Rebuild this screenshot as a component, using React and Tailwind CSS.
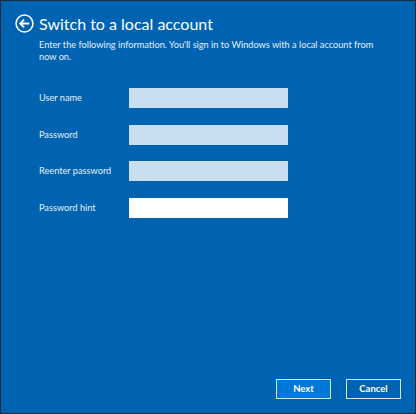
import React from 'react'

const FIELDS = [
  { label: 'User name', color: 'bg-[#c9dfef]' },
  { label: 'Password', color: 'bg-[#c9dfef]' },
  { label: 'Reenter password', color: 'bg-[#c9dfef]' },
  { label: 'Password hint', color: 'bg-white' },
]

const App = () => {
  return (
    <div className="w-[416px] h-[414px] flex flex-col overflow-hidden bg-[#0063b1] border border-[#1c2a3a] text-white font-['Lato',sans-serif]">
      {/* Header */}
      <div className="flex items-center gap-[5px] pl-[14px] pt-[13px]">
        <svg className="w-[19px] h-[19px]" viewBox="0 0 20 20" fill="none" stroke="white">
          <circle cx="10" cy="10" r="8.9" strokeWidth="1.6" />
          <path d="M15 10H6M9.5 6 5.5 10l4 4" strokeWidth="2" />
        </svg>
        <h1 className="text-[16px] leading-[19px] font-normal">Switch to a local account</h1>
      </div>

      <p className="ml-[38px] mt-[5.5px] w-[350px] text-[9.2px] leading-[12.5px] text-[#e6f0f8]">
        Enter the following information. You'll sign in to Windows with a local account from now on.
      </p>

      {/* Form */}
      <div className="ml-[38px] mt-[24.5px] flex flex-col gap-[16.7px]">
        {FIELDS.map(f => (
          <div key={f.label} className="flex items-center">
            <label className="w-[90px] text-[9.2px] text-[#e6f0f8]">{f.label}</label>
            <input type="text" className={`w-[159px] h-[20px] outline-none ${f.color}`} />
          </div>
        ))}
      </div>

      {/* Buttons */}
      <div className="mt-auto mb-[14px] mr-[14px] flex justify-end gap-[15px]">
        <button className="w-[55px] h-[20px] bg-[#0078d7] border border-[#d5e6f3] text-[9.5px] font-bold">Next</button>
        <button className="w-[55px] h-[20px] bg-[#0063b1] border border-[#d5e6f3] text-[9.5px] font-bold">Cancel</button>
      </div>
    </div>
  )
}

export default App
